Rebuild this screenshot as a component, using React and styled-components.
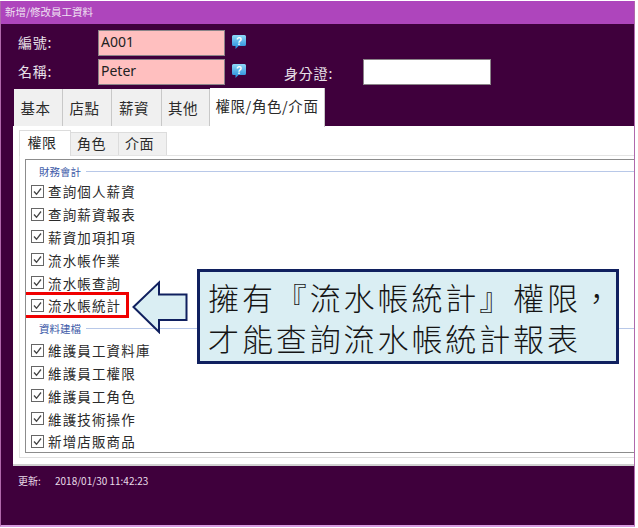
import React from "react";
import styled, { createGlobalStyle } from "styled-components";

const FONT = `"Noto Sans CJK TC", "Noto Sans CJK SC", "Liberation Sans", sans-serif`;

const Global = createGlobalStyle`
  html, body { margin: 0; padding: 0; background: #fff; }
  body { font-family: ${FONT}; width: 638px; height: 528px; overflow: hidden; }
`;

const Stage = styled.div`
  position: relative;
  width: 638px;
  height: 528px;
  background: #fff;
  overflow: hidden;
`;
const Win = styled.div`
  width: 635px;
  height: 526px;
  margin-top: 1px;
  box-sizing: border-box;
  display: flex;
  flex-direction: column;
  background: #3f003c;
  border-left: 1px solid #b068ac;
  border-right: 1px solid #b068ac;
  border-bottom: 2px solid #d89ce0;
`;
const TitleBar = styled.div`
  height: 23px;
  flex: none;
  background: #ae45bc;
  color: #efe0f2;
  font-size: 10.5px;
  line-height: 22px;
  padding-left: 4px;
`;
const Form = styled.div`
  flex: none;
  height: 63px;
  padding: 6px 0 0 17px;
  box-sizing: border-box;
  display: flex;
  flex-direction: column;
  gap: 2px;
`;
const FormRow = styled.div`
  display: flex;
  align-items: flex-start;
  height: 27px;
`;
const Label = styled.div`
  width: ${(p) => p.$w}px;
  flex: none;
  color: #e8e0e8;
  font-size: 14px;
  line-height: 24px;
  letter-spacing: 0.8px;
  padding-top: ${(p) => p.$top || 0}px;
`;
const Field = styled.div`
  width: ${(p) => p.$w || 127}px;
  height: 26px;
  flex: none;
  box-sizing: border-box;
  background: ${(p) => (p.$pink ? "#ffbfbf" : "#fff")};
  border: 1px solid #8a8488;
  color: #222;
  font-family: "Noto Sans", ${FONT};
  font-size: 14px;
  line-height: 21px;
  padding-left: 2px;
`;
const Help = styled.svg`
  width: 16px;
  height: 16px;
  flex: none;
  margin: 4px ${(p) => p.$after || 0}px 0 6px;
`;
const OuterTabs = styled.div`
  display: flex;
  align-items: flex-end;
  height: 39px;
  flex: none;
  padding-left: 13px;
  position: relative;
  z-index: 1;
`;
const Tab = styled.div`
  box-sizing: border-box;
  width: ${(p) => p.$w}px;
  height: ${(p) => (p.$active ? 39 : 37)}px;
  margin-bottom: ${(p) => (p.$active ? -1 : 0)}px;
  background: ${(p) => (p.$active ? "#fff" : "#f0f0f0")};
  border-right: 1px solid #c8c8c8;
  color: #2a2a2a;
  font-size: 14.5px;
  letter-spacing: 0.6px;
  display: flex;
  align-items: center;
  justify-content: center;
  padding-bottom: ${(p) => (p.$active ? 4 : 0)}px;
  padding-right: ${(p) => (p.$active ? 0 : 5)}px;
`;
const OuterPanel = styled.div`
  flex: none;
  height: 340px;
  margin-left: 12px;
  box-sizing: border-box;
  background: #fff;
  border-bottom: 2px solid #d0d0d0;
  padding: 4px 0 0 6px;
  display: flex;
  flex-direction: column;
`;
const InnerTabs = styled.div`
  display: flex;
  align-items: flex-end;
  height: 25px;
  flex: none;
  border-bottom: 1px solid #e4e4e4;
`;
const InnerTab = styled.div`
  box-sizing: border-box;
  width: ${(p) => p.$w}px;
  height: ${(p) => (p.$active ? 26 : 23)}px;
  margin-bottom: ${(p) => (p.$active ? -1 : 0)}px;
  background: ${(p) => (p.$active ? "#fff" : "#f0f0f0")};
  border: 1px solid #dcdcdc;
  border-left-width: ${(p) => (p.$active ? 1 : 0)}px;
  border-bottom-width: 0;
  color: #2a2a2a;
  font-size: 14px;
  letter-spacing: 0.6px;
  display: flex;
  align-items: center;
  justify-content: center;
  padding: 0 6px 3px 0;
`;
const InnerPanel = styled.div`
  flex: 1;
  min-height: 0;
  box-sizing: border-box;
  border-left: 1px solid #e4e4e4;
  border-bottom: 1px solid #e0e0e0;
  margin-bottom: 6px;
  padding: 3px 0 4px 5px;
  display: flex;
`;
const GroupBox = styled.div`
  flex: 1;
  min-width: 0;
  box-sizing: border-box;
  border: 1px solid #8c8c8c;
  border-right: 0;
  overflow: hidden;
  padding-top: 3px;
`;
const Legend = styled.div`
  height: 17px;
  display: flex;
  align-items: center;
  gap: 5px;
  padding-left: 13px;
  margin-top: ${(p) => p.$top || 0}px;
  color: #3d5aa8;
  font-size: 10.5px;
  &::after {
    content: "";
    flex: 1;
    height: 1px;
    background: #b8c8e8;
  }
`;
const List = styled.div`
  display: flex;
  flex-direction: column;
  margin-top: ${(p) => p.$top || 0}px;
`;
const Item = styled.div`
  height: 22.8px;
  display: flex;
  align-items: center;
  gap: 4px;
  padding-left: 5px;
  color: #2a2a2a;
  font-size: 13.5px;
  letter-spacing: 1.15px;
  white-space: nowrap;
  position: relative;
  ${(p) =>
    p.$hl &&
    `&::before {
      content: "";
      position: absolute;
      left: -3px;
      top: -2px;
      width: 106px;
      height: 26px;
      box-sizing: border-box;
      border: 3px solid #f00000;
    }`}
`;
const Check = styled.svg`
  width: 13px;
  height: 13px;
  flex: none;
`;
const Footer = styled.div`
  flex: none;
  display: flex;
  padding: 7px 0 0 17px;
  color: #e8dce8;
  font-size: 10px;
  line-height: 16px;
`;
const FooterKey = styled.div`
  width: 37px;
`;
const Arrow = styled.svg`
  position: absolute;
  left: 132px;
  top: 280px;
  width: 56px;
  height: 54px;
`;
const Callout = styled.div`
  position: absolute;
  left: 197px;
  top: 269px;
  width: 422px;
  height: 95px;
  box-sizing: border-box;
  background: #daeef3;
  border: 3px solid #10205f;
  padding: 4px 0 0 8px;
  color: #151515;
  font-size: 31px;
  font-weight: 300;
  letter-spacing: 2.9px;
  line-height: 41px;
  white-space: nowrap;
`;

const HelpIcon = ({ after }) => (
  <Help viewBox="0 0 16 16" $after={after}>
    <defs>
      <linearGradient id="hb" x1="0" y1="0" x2="0" y2="1">
        <stop offset="0" stopColor="#8fd8f8" />
        <stop offset="1" stopColor="#1f86d8" />
      </linearGradient>
    </defs>
    <path d="M2.5 1h11A1.5 1.5 0 0 1 15 2.5v8a1.5 1.5 0 0 1-1.500 1.500H7.500L4.500 15v-3h-2A1.500 1.500 0 0 1 1 10.500v-8A1.500 1.500 0 0 1 2.500 1z" fill="url(#hb)" />
    <text x="8" y="10.500" textAnchor="middle" fontSize="10" fontWeight="700" fontFamily="Liberation Sans, sans-serif" fill="#fff">?</text>
  </Help>
);

const CheckIcon = () => (
  <Check viewBox="0 0 13 13">
    <rect x="0.500" y="0.500" width="12" height="12" fill="#fff" stroke="#666" />
    <path d="M3 6.500l2.500 2.800L10 3.500" fill="none" stroke="#444" strokeWidth="1.300" />
  </Check>
);

const Row = ({ text, hl }) => (
  <Item $hl={hl}>
    <CheckIcon />
    <span>{text}</span>
  </Item>
);

const finance = ["查詢個人薪資", "查詢薪資報表", "薪資加項扣項", "流水帳作業", "流水帳查詢", "流水帳統計"];
const master = ["維護員工資料庫", "維護員工權限", "維護員工角色", "維護技術操作", "新增店販商品"];

export default function App() {
  return (
    <Stage>
      <Global />
      <Win>
        <TitleBar>新增/修改員工資料</TitleBar>
        <Form>
          <FormRow>
            <Label $w={80}>編號:</Label>
            <Field $pink>A001</Field>
            <HelpIcon />
          </FormRow>
          <FormRow>
            <Label $w={80}>名稱:</Label>
            <Field $pink>Peter</Field>
            <HelpIcon after={37} />
            <Label $w={79} $top={2}>身分證:</Label>
            <Field $w={128} />
          </FormRow>
        </Form>
        <OuterTabs>
          <Tab $w={49}>基本</Tab>
          <Tab $w={49}>店點</Tab>
          <Tab $w={50}>薪資</Tab>
          <Tab $w={48}>其他</Tab>
          <Tab $w={115} $active>權限/角色/介面</Tab>
        </OuterTabs>
        <OuterPanel>
          <InnerTabs>
            <InnerTab $w={52} $active>權限</InnerTab>
            <InnerTab $w={48}>角色</InnerTab>
            <InnerTab $w={48}>介面</InnerTab>
          </InnerTabs>
          <InnerPanel>
            <GroupBox>
              <Legend>財務會計</Legend>
              <List>
                {finance.map((t, i) => (
                  <Row key={t} text={t} hl={i === 5} />
                ))}
              </List>
              <Legend $top={3}>資料建檔</Legend>
              <List $top={2}>
                {master.map((t) => (
                  <Row key={t} text={t} />
                ))}
              </List>
            </GroupBox>
          </InnerPanel>
        </OuterPanel>
        <Footer>
          <FooterKey>更新:</FooterKey>
          <div>2018/01/30 11:42:23</div>
        </Footer>
      </Win>
      <Arrow viewBox="0 0 56 54">
        <path d="M1.500 27L27 2.500V14.500H54.500V40H27V52z" fill="#daeef3" stroke="#10205f" strokeWidth="2" />
      </Arrow>
      <Callout>
        擁有『流水帳統計』權限，
        <br />
        才能查詢流水帳統計報表
      </Callout>
    </Stage>
  );
}
